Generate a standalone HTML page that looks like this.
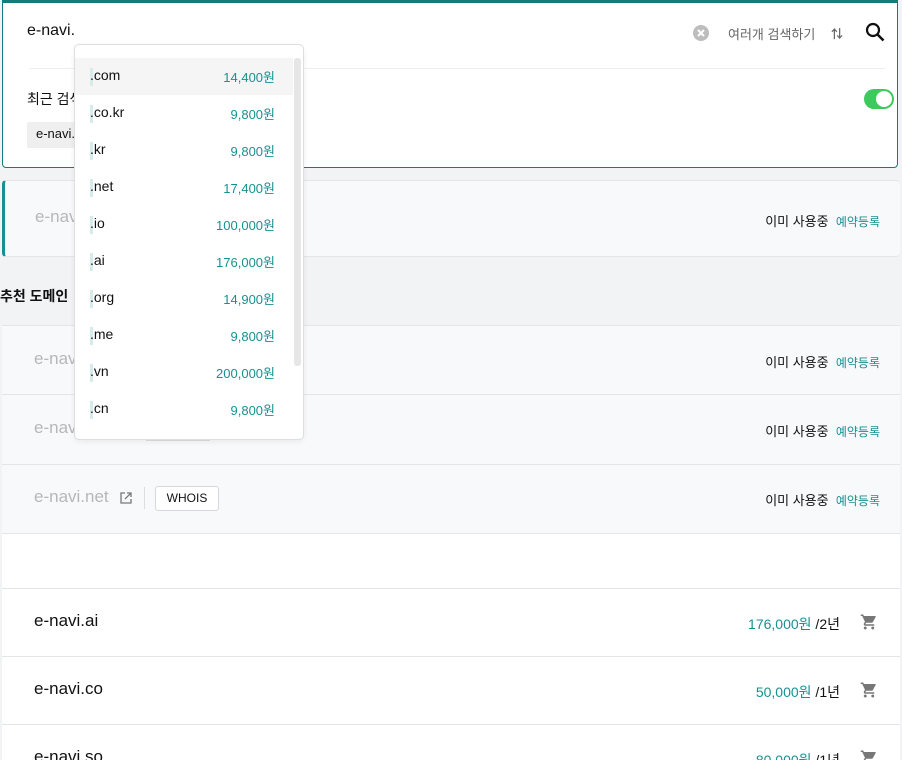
<!DOCTYPE html>
<html><head><meta charset="utf-8"><style>
*{box-sizing:border-box;margin:0;padding:0}
html,body{width:902px;height:760px;overflow:hidden}
body{background:#f2f3f5;font-family:"Liberation Sans","Noto Sans CJK KR",sans-serif;color:#111;position:relative}
.abs{position:absolute}
.search{left:2px;top:0;width:896px;height:168px;background:#fff;border:1px solid #137b7b;border-top:3px solid #137b7b;border-radius:0 0 4px 4px}
.teal{color:#17918f}
.row{position:absolute;left:2px;width:898px;border-bottom:1px solid #e3e5e8;font-size:15px}
.gray{background:#f8f9fb}
.white{background:#fff}
.dn{position:absolute;left:32px;font-size:17px}
.status{position:absolute;right:20px;font-size:13px}
.dd{left:74px;top:44px;width:230px;height:396px;background:#fff;border:1px solid #dcdee1;border-radius:5px;box-shadow:0 2px 6px rgba(0,0,0,.06)}
.it{position:absolute;left:0;width:218px;height:37px;font-size:14px}
.it .n{position:absolute;left:15px;top:9px;z-index:1}
.it .bar{position:absolute;left:15px;top:10px;width:3px;height:18px;background:#d6ecea}
.it .p{position:absolute;right:18px;top:9px;font-size:13px;color:#17918f}
.cart{position:absolute;right:22px}
</style></head><body>
<div class="abs search">
 <div class="abs" style="left:24px;top:19px;font-size:16px">e-navi.</div>
 <svg class="abs" style="left:690px;top:22px" width="16" height="16" viewBox="0 0 16 16"><circle cx="8" cy="8" r="8" fill="#bdbdbd"/><path d="M5 5l6 6M11 5l-6 6" stroke="#fff" stroke-width="2"/></svg>
 <div class="abs" style="left:725px;top:21px;font-size:13px;color:#666">여러개 검색하기</div>
 <div class="abs" style="left:828px;top:22px;font-size:12px;color:#666;font-weight:bold">⇅</div>
 <svg class="abs" style="left:862px;top:19px" width="20" height="20" viewBox="0 0 20 20"><circle cx="8" cy="8" r="6" fill="none" stroke="#111" stroke-width="2.2"/><path d="M12.5 12.5l6 6" stroke="#111" stroke-width="2.6"/></svg>
 <div class="abs" style="left:26px;top:65px;width:856px;height:1px;background:#eceef0"></div>
 <div class="abs" style="left:24px;top:86px;font-size:14px">최근 검색</div>
 <div class="abs" style="left:24px;top:119px;height:26px;width:60px;background:#efefef;border-radius:2px;font-size:13px;padding:4px 9px">e-navi.</div>
 <div class="abs" style="left:861px;top:86px;width:30px;height:20px;border-radius:10px;background:#3ec95d"><div class="abs" style="right:2px;top:2px;width:16px;height:16px;border-radius:50%;background:#fff"></div></div>
</div>

<div class="row gray" style="top:180px;height:77px;border-left:3px solid #17918f;border-radius:4px;border-top:1px solid #e3e5e8">
 <div class="dn" style="top:26px;color:#b5b7bb;left:30px">e-navi.com</div>
 <div class="status" style="top:30px">이미 사용중 &nbsp;<span class="teal" style="font-size:12px">예약등록</span></div>
</div>
<div class="abs" style="left:0;top:286px;font-size:14px;font-weight:bold">추천 도메인</div>

<div class="row gray" style="top:325px;height:70px;border-top:1px solid #e3e5e8">
 <div class="dn" style="top:23px;color:#b5b7bb">e-navi.co.kr</div>
 <div class="status" style="top:26px">이미 사용중 &nbsp;<span class="teal" style="font-size:12px">예약등록</span></div>
</div>
<div class="row gray" style="top:395px;height:70px">
 <div class="dn" style="top:23px;color:#b5b7bb">e-navi.kr</div>
 <div class="abs" style="left:144px;top:30px;width:64px;height:16px;border:1px solid #ddd;border-top:none;background:#fff"></div>
 <div class="status" style="top:26px">이미 사용중 &nbsp;<span class="teal" style="font-size:12px">예약등록</span></div>
</div>
<div class="row gray" style="top:465px;height:69px">
 <div class="dn" style="top:22px;color:#b5b7bb">e-navi.net</div>
 <svg class="abs" style="left:118px;top:27px" width="12" height="12" viewBox="0 0 12 12"><path d="M5 1H1v10h10V7M7 1h4v4M11 1L5 7" fill="none" stroke="#777" stroke-width="1.3"/></svg>
 <div class="abs" style="left:142px;top:22px;width:1px;height:22px;background:#ddd"></div>
 <div class="abs" style="left:153px;top:21px;width:64px;height:25px;border:1px solid #d6d8db;border-radius:3px;background:#fff;font-size:12px;text-align:center;line-height:23px">WHOIS</div>
 <div class="status" style="top:25px">이미 사용중 &nbsp;<span class="teal" style="font-size:12px">예약등록</span></div>
</div>
<div class="row white" style="top:534px;height:55px"></div>
<div class="row white" style="top:589px;height:68px">
 <div class="dn" style="top:22px">e-navi.ai</div>
 <div class="abs" style="right:60px;top:25px;font-size:14px"><span class="teal">176,000원</span> /2년</div>
 <svg class="cart" style="top:24px" width="18" height="18" viewBox="0 0 24 24"><path fill="#777" d="M7 18c-1.1 0-2 .9-2 2s.9 2 2 2 2-.9 2-2-.9-2-2-2zM1 2v2h2l3.6 7.6-1.4 2.4c-.1.3-.2.6-.2 1 0 1.1.9 2 2 2h12v-2H7.4c-.1 0-.2-.1-.2-.2v-.1l.9-1.7h7.4c.8 0 1.4-.4 1.7-1l3.6-6.5c.1-.2.2-.3.2-.5 0-.6-.4-1-1-1H5.2l-.9-2H1zm16 16c-1.1 0-2 .9-2 2s.9 2 2 2 2-.9 2-2-.9-2-2-2z"/></svg>
</div>
<div class="row white" style="top:657px;height:68px">
 <div class="dn" style="top:22px">e-navi.co</div>
 <div class="abs" style="right:60px;top:25px;font-size:14px"><span class="teal">50,000원</span> /1년</div>
 <svg class="cart" style="top:24px" width="18" height="18" viewBox="0 0 24 24"><path fill="#777" d="M7 18c-1.1 0-2 .9-2 2s.9 2 2 2 2-.9 2-2-.9-2-2-2zM1 2v2h2l3.6 7.6-1.4 2.4c-.1.3-.2.6-.2 1 0 1.1.9 2 2 2h12v-2H7.4c-.1 0-.2-.1-.2-.2v-.1l.9-1.7h7.4c.8 0 1.4-.4 1.7-1l3.6-6.5c.1-.2.2-.3.2-.5 0-.6-.4-1-1-1H5.2l-.9-2H1zm16 16c-1.1 0-2 .9-2 2s.9 2 2 2 2-.9 2-2-.9-2-2-2z"/></svg>
</div>
<div class="row white" style="top:725px;height:60px">
 <div class="dn" style="top:22px">e-navi.so</div>
 <div class="abs" style="right:60px;top:25px;font-size:14px"><span class="teal">80,000원</span> /1년</div>
 <svg class="cart" style="top:24px" width="18" height="18" viewBox="0 0 24 24"><path fill="#777" d="M7 18c-1.1 0-2 .9-2 2s.9 2 2 2 2-.9 2-2-.9-2-2-2zM1 2v2h2l3.6 7.6-1.4 2.4c-.1.3-.2.6-.2 1 0 1.1.9 2 2 2h12v-2H7.4c-.1 0-.2-.1-.2-.2v-.1l.9-1.7h7.4c.8 0 1.4-.4 1.7-1l3.6-6.5c.1-.2.2-.3.2-.5 0-.6-.4-1-1-1H5.2l-.9-2H1zm16 16c-1.1 0-2 .9-2 2s.9 2 2 2 2-.9 2-2-.9-2-2-2z"/></svg>
</div>

<div class="abs dd">
 <div class="abs" style="left:219px;top:13px;width:7px;height:308px;background:#e6e6e6;border-radius:3px"></div>
 <div class="it" style="top:13px;background:#f5f5f5"><i class="bar"></i><span class="n">.com</span><span class="p">14,400원</span></div>
 <div class="it" style="top:50px"><i class="bar"></i><span class="n">.co.kr</span><span class="p">9,800원</span></div>
 <div class="it" style="top:87px"><i class="bar"></i><span class="n">.kr</span><span class="p">9,800원</span></div>
 <div class="it" style="top:124px"><i class="bar"></i><span class="n">.net</span><span class="p">17,400원</span></div>
 <div class="it" style="top:161px"><i class="bar"></i><span class="n">.io</span><span class="p">100,000원</span></div>
 <div class="it" style="top:198px"><i class="bar"></i><span class="n">.ai</span><span class="p">176,000원</span></div>
 <div class="it" style="top:235px"><i class="bar"></i><span class="n">.org</span><span class="p">14,900원</span></div>
 <div class="it" style="top:272px"><i class="bar"></i><span class="n">.me</span><span class="p">9,800원</span></div>
 <div class="it" style="top:309px"><i class="bar"></i><span class="n">.vn</span><span class="p">200,000원</span></div>
 <div class="it" style="top:346px"><i class="bar"></i><span class="n">.cn</span><span class="p">9,800원</span></div>
</div>
</body></html>
